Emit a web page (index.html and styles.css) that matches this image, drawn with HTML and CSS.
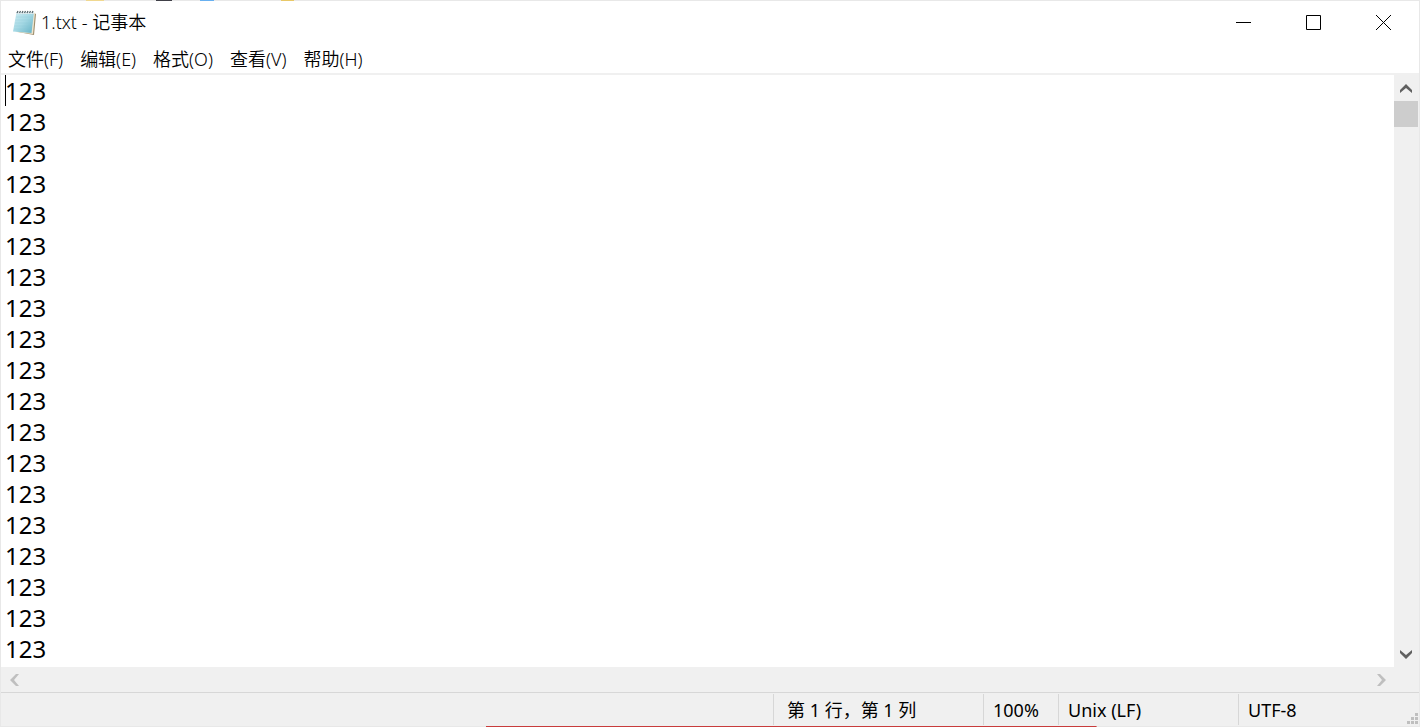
FILE: index.html
```
<!DOCTYPE html>
<html lang="zh-CN">
<head>
  <meta charset="UTF-8">
  <meta name="viewport" content="width=device-width, initial-scale=1.0">
  <title>1.txt - 记事本</title>
  <link rel="stylesheet" href="styles.css">
</head>
<body>

<div class="window">
  <!-- Title bar -->
  <header class="titlebar">
    <svg class="app-icon" width="24" height="26" viewBox="0 0 24 26" aria-hidden="true">
      <defs>
        <linearGradient id="paper" x1="0" y1="0" x2="1" y2="1">
          <stop offset="0" stop-color="#d3eef4"/>
          <stop offset="0.5" stop-color="#a4d8e4"/>
          <stop offset="1" stop-color="#62b0c4"/>
        </linearGradient>
      </defs>
      <path d="M6 22 L22 25 L24 4 L22 3 Z" fill="#9c8d6c"/>
      <path d="M4 22 L21 24 L23 3 L21 2 Z" fill="#efe6cf"/>
      <path d="M4.500 2 H22 L19.500 23 L1 21.500 Z" fill="url(#paper)"/>
      <path d="M4 7 H21 M3.500 10 H21 M3 13 H20.500 M2.500 16 H20 M2 19 H20" stroke="#8cc5d3" stroke-width="0.300"/>
      <path d="M4.500 2 H22 V4 H4 Z" fill="#dcebee"/>
      <path d="M5 3 L6 1 M7.500 3 L8.500 1 M10 3 L11 1 M12.500 3 L13.500 1 M15 3 L16 1 M17.500 3 L18.500 1 M20 3 L21 1" stroke="#55646a" stroke-width="1.200"/>
    </svg>
    <h1 class="title">1.txt - 记事本</h1>
    <div class="window-buttons">
      <button type="button" aria-label="最小化">
        <svg width="15" height="15" viewBox="0 0 15 15"><path d="M0 7.500H15" stroke="#000"/></svg>
      </button>
      <button type="button" aria-label="最大化">
        <svg width="15" height="15" viewBox="0 0 15 15"><path d="M0.500 0.500H14.500V14.500H0.500Z" fill="none" stroke="#000"/></svg>
      </button>
      <button type="button" aria-label="关闭">
        <svg width="15" height="15" viewBox="0 0 15 15"><path d="M0 0L15 15M15 0L0 15" stroke="#000"/></svg>
      </button>
    </div>
  </header>

  <!-- Menu -->
  <nav class="menubar">
    <button type="button">文件(F)</button>
    <button type="button">编辑(E)</button>
    <button type="button">格式(O)</button>
    <button type="button">查看(V)</button>
    <button type="button">帮助(H)</button>
  </nav>

  <!-- Text area with its scroll bars -->
  <main class="editor">
    <textarea class="text" aria-label="文本编辑器" wrap="off" spellcheck="false">123
123
123
123
123
123
123
123
123
123
123
123
123
123
123
123
123
123
123</textarea>
    <span class="caret"></span>
    <div class="scroll-v">
      <button type="button" aria-label="向上滚动">
        <svg width="12" height="9" viewBox="0 0 12 9"><path d="M0 6L6 0L12 6V9L6 4L0 9Z" fill="#606060"/></svg>
      </button>
      <div class="thumb"></div>
      <button type="button" class="down" aria-label="向下滚动">
        <svg width="12" height="9" viewBox="0 0 12 9"><path d="M0 3L6 9L12 3V0L6 5L0 0Z" fill="#606060"/></svg>
      </button>
    </div>
    <div class="scroll-h">
      <button type="button" aria-label="向左滚动" disabled>
        <svg width="9" height="12" viewBox="0 0 9 12"><path d="M6 0L0 6L6 12H9L4 6L9 0Z" fill="#bfbfbf"/></svg>
      </button>
      <button type="button" aria-label="向右滚动" disabled>
        <svg width="9" height="12" viewBox="0 0 9 12"><path d="M3 0L9 6L3 12H0L5 6L0 0Z" fill="#bfbfbf"/></svg>
      </button>
    </div>
  </main>

  <!-- Status bar -->
  <footer class="statusbar">
    <span class="cell position">第 1 行，第 1 列</span>
    <span class="cell zoom">100%</span>
    <span class="cell eol">Unix (LF)</span>
    <span class="cell encoding">UTF-8</span>
    <svg class="grip" width="12" height="12" viewBox="0 0 12 12" aria-hidden="true">
      <path d="M8 0h3v3h-3zM4 4h3v3h-3zM8 4h3v3h-3zM0 8h3v3h-3zM4 8h3v3h-3zM8 8h3v3h-3z" fill="#bfbfbf"/>
    </svg>
  </footer>
</div>

</body>
</html>
```
FILE: styles.css
```
* {
  box-sizing: border-box;
}

body {
  margin: 0;
  font-family: "Noto Sans", "Noto Sans CJK SC", sans-serif;
  font-size: 18px;
  color: #000;
}

button {
  display: flex;
  align-items: center;
  justify-content: center;
  padding: 0;
  border: none;
  background: none;
  font: inherit;
  color: inherit;
}

.window {
  display: flex;
  flex-direction: column;
  height: 100vh;
  padding: 1px;
  background:
    linear-gradient(#c83c3c, #c83c3c) 60% 100% / 43% 1px no-repeat,
    linear-gradient(90deg, transparent 86px, #f0d890 86px 104px, transparent 104px 156px, #404048 156px 172px, transparent 172px 200px, #68b0f0 200px 214px, transparent 214px 281px, #e8c868 281px 294px, transparent 294px) 0 0 / 100% 1px no-repeat,
    #e8e8e8;
}

.titlebar {
  display: flex;
  align-items: center;
  height: 44px;
  padding-left: 11px;
  background-color: #fff;
}

.title {
  flex: 1;
  margin: 0 0 0 5px;
  padding-bottom: 2px;
  font-size: 18px;
  font-weight: 350;
  line-height: 24px;
}

.window-buttons {
  display: flex;
}

.window-buttons button {
  width: 70px;
  height: 44px;
  padding: 0 1px 2px 0;
}

.menubar {
  display: flex;
  gap: 17px;
  height: 30px;
  padding: 0 0 2px 7px;
  border-bottom: 2px solid #f0f0f0;
  background-color: #fff;
  font-weight: 350;
}

.editor {
  position: relative;
  display: grid;
  flex: 1;
  grid-template-columns: 1fr 25px;
  grid-template-rows: 1fr 25px;
  min-height: 0;
  background-color: #f0f0f0;
}

.text {
  width: 100%;
  height: 100%;
  padding: 0 4px;
  border: none;
  outline: none;
  resize: none;
  overflow: hidden;
  background-color: #fff;
  font-family: "Noto Sans", "Noto Sans CJK SC", sans-serif;
  font-size: 24px;
  line-height: 31px;
  color: #000;
}

/* caret sits over the first line */
.caret {
  position: absolute;
  top: 0;
  left: 4px;
  width: 1px;
  height: 31px;
  background-color: #000;
}

.scroll-v {
  display: flex;
  flex-direction: column;
  width: 24px;
}

.scroll-v button {
  height: 26px;
}

.thumb {
  height: 26px;
  background-color: #cdcdcd;
}

.down {
  margin-top: auto;
}

.scroll-h {
  display: flex;
  justify-content: space-between;
}

.scroll-h button {
  width: 26px;
}

.statusbar {
  position: relative;
  display: flex;
  justify-content: flex-end;
  height: 34px;
  border-top: 1px solid #d7d7d7;
  background-color: #f0f0f0;
}

.cell {
  margin: 1px 0;
  padding-left: 9px;
  border-left: 1px solid #d7d7d7;
  line-height: 32px;
  white-space: nowrap;
}

.position {
  width: 210px;
  padding-left: 13px;
}

.zoom {
  width: 75px;
}

.eol {
  width: 180px;
}

.encoding {
  width: 181px;
}

.grip {
  position: absolute;
  right: 0;
  bottom: 1px;
}
```
